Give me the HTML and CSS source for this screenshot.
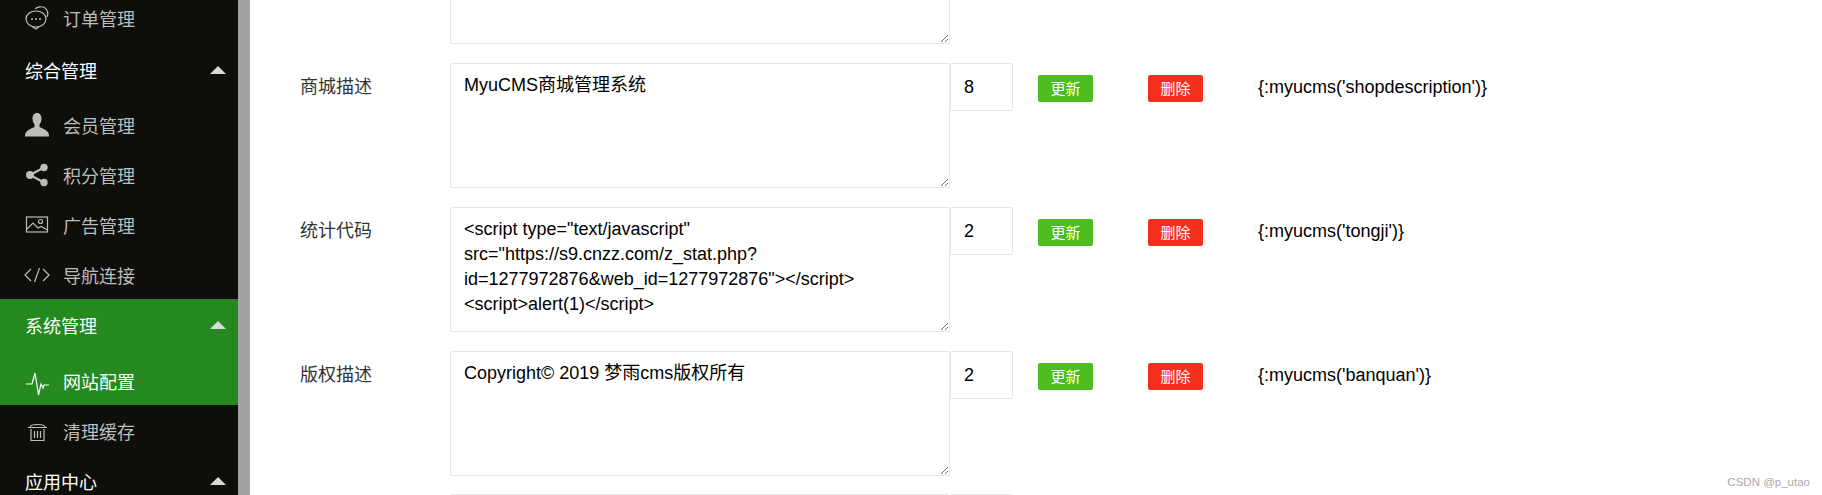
FILE: index.html
```html
<!DOCTYPE html>
<html lang="en">
<head>
    <meta charset="UTF-8">
    <title>网站配置</title>
    <link rel="stylesheet" href="styles.css">
</head>
<body>
    <aside class="sidebar">
        <a class="nav-item">
            <svg class="icon" viewBox="0 0 24 24"><path d="M10 3c2-2.500 7-3 10-1 3 2 3.500 6 2 9"/><ellipse cx="11" cy="13" rx="10" ry="8"/><path d="M7 20.500l4 2.500 3-2.500"/><circle class="solid" cx="7" cy="13" r="1"/><circle class="solid" cx="11" cy="13" r="1"/><circle class="solid" cx="15" cy="13" r="1"/></svg>
            <span>订单管理</span>
        </a>
        <div class="nav-head"><span>综合管理</span><i class="caret"></i></div>
        <a class="nav-item">
            <svg class="icon" viewBox="0 0 24 24"><path class="solid" d="M12 0c3 0 4.500 2.500 4.500 5.500 0 2.500-1 4.500-2 6v2.500c2 1.500 9 2.500 9.500 8v1.500H0V22c.5-5.500 7.500-6.500 9.500-8v-2.500c-1-1.500-2-3.500-2-6C7.500 2.500 9 0 12 0z"/></svg>
            <span>会员管理</span>
        </a>
        <a class="nav-item">
            <svg class="icon" viewBox="0 0 24 24"><path d="M5 12L19 4.500M5 12l14 7.500" stroke-width="2"/><circle class="solid" cx="5" cy="12" r="4"/><circle class="solid" cx="19" cy="4.500" r="3.700"/><circle class="solid" cx="19" cy="19.500" r="3.700"/></svg>
            <span>积分管理</span>
        </a>
        <a class="nav-item">
            <svg class="icon" viewBox="0 0 24 24"><rect x="1.500" y="4" width="21" height="15"/><path d="M1.500 16.500L8 10l5 5 3-1.500 6.500 3.500"/><circle cx="15.500" cy="8.500" r="2"/></svg>
            <span>广告管理</span>
        </a>
        <a class="nav-item">
            <svg class="icon icon-wide" viewBox="0 0 26 24"><path d="M7 6l-6 6 6 6M19 6l6 6-6 6M15.500 5l-5 14"/></svg>
            <span>导航连接</span>
        </a>
        <div class="nav-group">
            <div class="nav-head"><span>系统管理</span><i class="caret"></i></div>
            <a class="nav-item active">
                <svg class="icon" viewBox="0 0 24 24"><path d="M1 12h6l3-11 3.500 22 2.500-11 2 4 1-3h5"/></svg>
                <span>网站配置</span>
            </a>
        </div>
        <a class="nav-item">
            <svg class="icon" viewBox="0 0 24 24"><path d="M3 8.500h19M5 8.500c0-2 2-3 7.500-3s7.500 1 7.500 3M6 10v11.500h13V10M9.500 12v7M12.500 12v7M15.500 12v7"/></svg>
            <span>清理缓存</span>
        </a>
        <div class="nav-head"><span>应用中心</span><i class="caret"></i></div>
    </aside>

    <main class="content">
        <div class="row">
            <label class="row-label"></label>
            <textarea class="row-text"></textarea>
            <input class="row-sort" type="text" value="">
        </div>
        <div class="row">
            <label class="row-label">商城描述</label>
            <textarea class="row-text">MyuCMS商城管理系统</textarea>
            <input class="row-sort" type="text" value="8">
            <button class="btn btn-update">更新</button>
            <button class="btn btn-delete">删除</button>
            <span class="row-code">{:myucms('shopdescription')}</span>
        </div>
        <div class="row">
            <label class="row-label">统计代码</label>
            <textarea class="row-text">&lt;script type="text/javascript" src="https://s9.cnzz.com/z_stat.php?id=1277972876&amp;web_id=1277972876"&gt;&lt;/script&gt;
&lt;script&gt;alert(1)&lt;/script&gt;</textarea>
            <input class="row-sort" type="text" value="2">
            <button class="btn btn-update">更新</button>
            <button class="btn btn-delete">删除</button>
            <span class="row-code">{:myucms('tongji')}</span>
        </div>
        <div class="row">
            <label class="row-label">版权描述</label>
            <textarea class="row-text">Copyright© 2019 梦雨cms版权所有</textarea>
            <input class="row-sort" type="text" value="2">
            <button class="btn btn-update">更新</button>
            <button class="btn btn-delete">删除</button>
            <span class="row-code">{:myucms('banquan')}</span>
        </div>
        <div class="row">
            <label class="row-label"></label>
            <textarea class="row-text"></textarea>
            <input class="row-sort" type="text" value="">
        </div>
    </main>

    <div class="watermark">CSDN @p_utao</div>
</body>
</html>
```

FILE: styles.css
```css
html, body {
    height: 100%;
}
body {
    margin: 0;
    display: flex;
    overflow: hidden;
    background-color: #fff;
    font-family: "Liberation Sans", "Noto Sans CJK SC", sans-serif;
    font-size: 18px;
    color: #000;
}

/* sidebar, scrolled a little so the first item is cut off */
.sidebar {
    flex: none;
    width: 238px;
    height: 100%;
    overflow: hidden;
    background-color: #0e0f0b;
    border-right: 12px solid #a3a3a3;
    color: #bdbdbd;
}
.sidebar > :first-child {
    margin-top: -6px;
    padding: 0 0 2px 25px;
}
.nav-item {
    display: flex;
    align-items: center;
    height: 50px;
    padding: 1px 0 0 25px;
    box-sizing: border-box;
}
.nav-item.active {
    padding-top: 4px;
    color: #fff;
}
.nav-item.active .icon {
    margin-top: 5px;
}
.nav-head {
    display: flex;
    align-items: center;
    justify-content: space-between;
    height: 55px;
    padding: 0 12px 3px 25px;
    box-sizing: border-box;
    color: #fff;
}
.nav-group {
    background-color: #248a20;
    padding-bottom: 1px;
}
.caret {
    width: 0;
    height: 0;
    border-left: 8px solid transparent;
    border-right: 8px solid transparent;
    border-bottom: 8px solid #d8d8d8;
}
.icon {
    flex: none;
    width: 24px;
    height: 24px;
    margin-right: 14px;
    fill: none;
    stroke: currentColor;
    stroke-width: 1.200;
}
.icon .solid {
    fill: currentColor;
    stroke: none;
}
.icon-wide {
    width: 26px;
    margin: 0 13px 0 -1px;
}

/* config rows */
.content {
    flex: 1;
    margin-top: -81px;
    padding-left: 50px;
}
.row {
    display: flex;
    align-items: flex-start;
    height: 125px;
    margin-bottom: 19px;
}
.row:last-child {
    margin-top: -1px;
}
.row-label {
    flex: none;
    width: 150px;
    line-height: 48px;
    color: #333;
}
.row-text {
    flex: none;
    width: 500px;
    height: 125px;
    padding: 9px 13px 7px;
    box-sizing: border-box;
    border: 1px solid #e6e6e6;
    border-radius: 2px;
    font: inherit;
    line-height: 25px;
    color: #000;
}
.row-sort {
    flex: none;
    width: 63px;
    height: 48px;
    padding: 0 13px;
    box-sizing: border-box;
    border: 1px solid #e6e6e6;
    border-radius: 2px;
    font: inherit;
    color: #000;
}
.btn {
    flex: none;
    width: 55px;
    height: 27px;
    margin: 12px 0 0 25px;
    padding: 0 0 2px;
    border: none;
    border-radius: 2px;
    font-family: inherit;
    font-size: 15px;
    color: #fff;
}
.btn-update {
    background-color: #4dbd1d;
}
.btn-delete {
    background-color: #f52f1e;
    margin-left: 55px;
}
.row-code {
    margin-left: 55px;
    line-height: 48px;
}

.watermark {
    position: absolute;
    right: 12px;
    bottom: 7px;
    font-size: 11.500px;
    color: #aaa;
}
```
